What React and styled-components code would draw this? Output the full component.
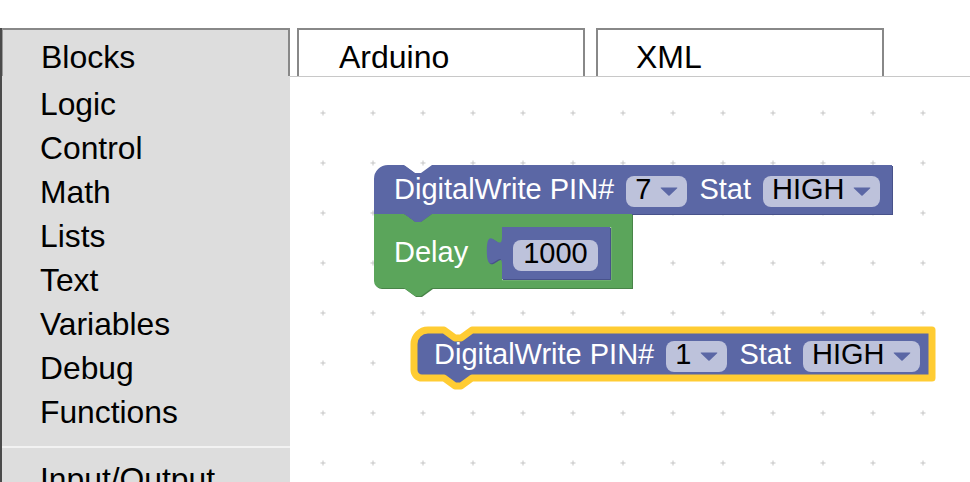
import React from 'react'
import styled, { createGlobalStyle } from 'styled-components'

const GlobalStyle = createGlobalStyle`
  html, body {
    margin: 0;
    padding: 0;
    background: #fff;
  }
  body {
    font-family: "Liberation Sans", Arial, Helvetica, sans-serif;
    overflow: hidden;
  }
`

const BLUE = { fill: '#5b67a5', dark: '#48528a', light: '#8c95c0' }
const GREEN = { fill: '#5ba55b', dark: '#488448', light: '#a5d0a5' }

const NOTCH = 'l 11,8 6,0 11,-8'
const NOTCH_BACK = 'l -11,8 -6,0 -11,-8'

// statement block outline: notch on top, tab below
function stackPath(w, h, rTop = 0, rBottom = 0) {
  const top = rTop ? `M 0,${rTop} A ${rTop},${rTop} 0 0 1 ${rTop},0` : 'M 0,0'
  const bottom = rBottom ? `H ${rBottom} A ${rBottom},${rBottom} 0 0 1 0,${h - rBottom}` : 'H 0'
  return `${top} H 30 ${NOTCH} H ${w} V ${h} H 58 ${NOTCH_BACK} ${bottom} Z`
}

// value block outline with the puzzle tab on the left
function valuePath(w, h) {
  return `M 0,0 v 9.5 c 0,19 -15.2,-15.2 -15.2,14.25 s 15.2,-4.75 15.2,14.25 V ${h} H ${w} V 0 Z`
}

const Page = styled.div`
  display: flex;
  width: 970px;
  height: 482px;
  padding-top: 28px;
  box-sizing: border-box;
  overflow: hidden;
`

const Sidebar = styled.aside`
  flex: none;
  width: 288px;
  background: #dddddd;
  border-left: 2px solid #4a4a4a;
  display: flex;
  flex-direction: column;
`

const SideTab = styled.div`
  height: 38px;
  padding: 8px 0 0 38px;
  line-height: 38px;
  font-size: 32px;
  color: #000;
  border-top: 2px solid #888;
  border-right: 2px solid #888;
  border-left: 1px solid #999;
`

const Menu = styled.ul`
  list-style: none;
  margin: 0;
  padding: 6px 0 0;
`

const MenuItem = styled.li`
  padding-left: 38px;
  font-size: 31.8px;
  line-height: 44px;
  color: #000;
  white-space: nowrap;
`

const Separator = styled.li`
  height: 2px;
  margin: 12px 0 9px;
  background: #f2f2f2;
`

const Main = styled.main`
  flex: 1;
  display: flex;
  flex-direction: column;
  min-width: 0;
`

const TabRow = styled.div`
  display: flex;
  height: 48px;
  border-bottom: 1px solid #c8c8c8;
`

const Tab = styled.div`
  width: 288px;
  height: 48px;
  box-sizing: border-box;
  margin-left: ${p => p.$gap}px;
  padding: 8px 0 0 ${p => p.$pl}px;
  line-height: 38px;
  font-size: 32px;
  color: #000;
  background: #fff;
  border: 2px solid #888;
  border-bottom: none;
`

const Workspace = styled.div`
  position: relative;
  flex: 1;
  overflow: hidden;
  background: #fff;
`

const Grid = styled.svg`
  position: absolute;
  inset: 0;
  width: 100%;
  height: 100%;
`

const BlockWrap = styled.div`
  position: absolute;
  left: ${p => p.$x}px;
  top: ${p => p.$y}px;
  width: ${p => p.$w}px;
  height: ${p => p.$h}px;
`

const Shape = styled.svg`
  position: absolute;
  left: 0;
  top: 0;
  overflow: visible;
`

const Row = styled.div`
  position: relative;
  display: flex;
  align-items: flex-start;
  gap: 12px;
  padding: ${p => p.$pt}px 0 0 ${p => p.$pl}px;
`

const Label = styled.span`
  margin-top: ${p => p.$dy || 0}px;
  color: #fff;
  font-size: 29px;
  line-height: 26px;
  white-space: nowrap;
`

const Field = styled.span`
  display: inline-flex;
  align-items: flex-start;
  gap: 9px;
  height: 31px;
  padding: 0 ${p => p.$px || 9}px;
  box-sizing: border-box;
  border-radius: 8px;
  background: #bdc2db;
  color: #000;
  font-size: 29px;
  line-height: 26px;
  white-space: nowrap;
`

const Arrow = styled.svg`
  align-self: center;
  flex: none;
  margin-top: -1px;
`

const ValueBlock = styled.div`
  position: relative;
  flex: none;
  width: ${p => p.$w}px;
  height: ${p => p.$h}px;
  margin-left: 22px;
`

function Dropdown({ value }) {
  return (
    <Field>
      <span>{value}</span>
      <Arrow width="18" height="9" viewBox="0 0 18 9">
        <path d="M1 0.5 H17 Q17.6 0.5 17.2 1.2 L9.6 8.4 Q9 9 8.4 8.4 L0.8 1.2 Q0.4 0.5 1 0.5 Z" fill="#5b67a5" />
      </Arrow>
    </Field>
  )
}

function BlockShape({ w, h, d, color, selected, children }) {
  return (
    <Shape width={w} height={h}>
      <path d={d} fill={color.dark} transform="translate(1,1)" />
      <path d={d} fill={color.fill} />
      {children}
      {selected && <path d={d} fill="none" stroke="#fc3" strokeWidth="7" strokeLinejoin="round" />}
    </Shape>
  )
}

function DigitalWrite({ x, y, pin, rBottom = 0, selected }) {
  const w = 518
  const h = selected ? 48 : 49
  return (
    <BlockWrap $x={x} $y={y} $w={w} $h={h}>
      <BlockShape w={w} h={h} d={stackPath(w, h, 14, rBottom)} color={BLUE} selected={selected} />
      <Row $pt={11} $pl={20}>
        <Label>DigitalWrite PIN#</Label>
        <Dropdown value={pin} />
        <Label>Stat</Label>
        <Dropdown value="HIGH" />
      </Row>
    </BlockWrap>
  )
}

function Delay({ x, y, ms }) {
  const w = 258
  const h = 74
  return (
    <BlockWrap $x={x} $y={y} $w={w} $h={h}>
      <BlockShape w={w} h={h} d={stackPath(w, h, 0, 7)} color={GREEN}>
        <path d="M 236.5,13 V 65.5 H 128" fill="none" stroke={GREEN.light} strokeWidth="1.5" />
      </BlockShape>
      <Row $pt={13} $pl={20}>
        <Label $dy={12}>Delay</Label>
        <ValueBlock $w={108} $h={52}>
          <BlockShape w={108} h={52} d={valuePath(108, 52)} color={BLUE} />
          <Row $pt={13} $pl={11}>
            <Field $px={10}>{ms}</Field>
          </Row>
        </ValueBlock>
      </Row>
    </BlockWrap>
  )
}

const categories = ['Logic', 'Control', 'Math', 'Lists', 'Text', 'Variables', 'Debug', 'Functions']

export default function App() {
  return (
    <>
      <GlobalStyle />
      <Page>
        <Sidebar>
          <SideTab>Blocks</SideTab>
          <Menu>
            {categories.map(c => (
              <MenuItem key={c}>{c}</MenuItem>
            ))}
            <Separator />
            <MenuItem>Input/Output</MenuItem>
          </Menu>
        </Sidebar>
        <Main>
          <TabRow>
            <Tab $gap={7} $pl={40}>Arduino</Tab>
            <Tab $gap={11} $pl={38}>XML</Tab>
          </TabRow>
          <Workspace>
            <Grid>
              <defs>
                <pattern id="grid" width="50" height="50" x="7.5" y="10.5" patternUnits="userSpaceOnUse">
                  <path d="M 22.5 25 h 5 M 25 22.5 v 5" stroke="#c4c4c4" strokeWidth="1" shapeRendering="crispEdges" />
                </pattern>
              </defs>
              <rect width="100%" height="100%" fill="url(#grid)" />
            </Grid>
            <DigitalWrite x={84} y={88} pin="7" />
            <Delay x={84} y={137} ms="1000" />
            <DigitalWrite x={124} y={253} pin="1" rBottom={8} selected />
          </Workspace>
        </Main>
      </Page>
    </>
  )
}
